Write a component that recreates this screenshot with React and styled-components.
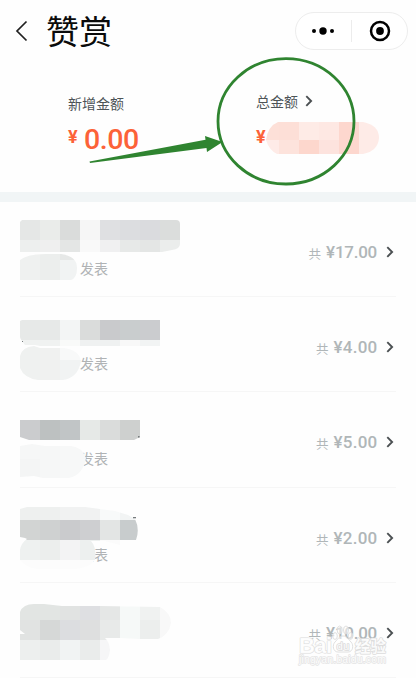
import React from 'react';
import styled, { createGlobalStyle } from 'styled-components';

const Global = createGlobalStyle`
  * { box-sizing: border-box; }
  body { margin: 0; background: #fefefe; font-family: "Noto Sans CJK SC", sans-serif; }
`;
const Screen = styled.main`
  position: relative;
  width: 416px;
  height: 678px;
  overflow: hidden;
  background: #fefefe;
`;
const Header = styled.header`
  display: flex;
  align-items: center;
  height: 61px;
  padding: 0 8px 0 15px;
`;
const BackIcon = styled.svg`
  width: 14px;
  height: 22px;
  margin-right: 17px;
`;
const Title = styled.h1`
  flex: 1;
  margin: 0;
  padding-bottom: 1px;
  font-size: 33px;
  line-height: 58px;
  font-weight: 400;
  color: #0b0b0b;
`;
const Capsule = styled.div`
  display: flex;
  align-items: center;
  width: 113px;
  height: 38px;
  border: 1px solid #ededed;
  border-radius: 19px;
  background: #fff;
`;
const CapsuleButton = styled.div`
  display: flex;
  flex: 1;
  align-items: center;
  justify-content: center;
  height: 22px;
  border-left: ${p => (p.$divided ? '1px solid #ececec' : '0')};
`;
const Summary = styled.section`
  display: grid;
  grid-template-columns: 188px 1fr;
  height: 131px;
  padding: 30px 0 0 68px;
  color: #4d5457;
`;
const Label = styled.div`
  display: flex;
  align-items: center;
  gap: 7px;
  height: 24px;
  margin-top: ${p => p.$lift || 0}px;
  font-size: 14px;
  line-height: 24px;
`;
const Total = styled.div`
  display: flex;
  align-items: flex-start;
  height: 34px;
  margin-top: ${p => p.$gap || 0}px;
  font-family: Roboto, sans-serif;
  font-weight: 500;
  color: #fc6238;
`;
const Currency = styled.span`
  width: ${p => p.$width}px;
  font-size: 18px;
  font-weight: 700;
  line-height: ${p => p.$line}px;
`;
const Figure = styled.span`
  font-size: 28.5px;
  line-height: 39px;
  letter-spacing: -0.4px;
`;
const Band = styled.div`
  height: 10px;
  background: #f1f5f6;
`;
const Row = styled.article`
  position: relative;
  display: flex;
  justify-content: space-between;
  height: ${p => p.$height}px;
  margin: 0 20px;
  border-bottom: 1px solid #f6f6f6;
`;
const Published = styled.span`
  padding: 54px 0 0 60px;
  font-size: 14px;
  line-height: 24px;
  color: #b0b3b5;
`;
const Sum = styled.div`
  display: flex;
  align-items: center;
  height: 24px;
  margin: 38px 2px 0 0;
  color: #b0b6b8;
`;
const Together = styled.span`
  padding-top: 4px;
  margin-right: 5px;
  font-size: 12.5px;
  line-height: 20px;
`;
const Amount = styled.span`
  margin-right: ${p => (p.$tight ? 9 : 8.5)}px;
  letter-spacing: ${p => (p.$tight ? -0.25 : 0.25)}px;
  font-family: Roboto, sans-serif;
  font-size: 17px;
  font-weight: 500;
  line-height: 24px;
`;
const RowMask = styled.svg`
  position: absolute;
  left: -20px;
  top: 0;
  width: 200px;
  height: 95px;
`;
const TotalMask = styled.svg`
  width: 116px;
  height: 34px;
  margin-left: -4px;
`;
const Annotation = styled.svg`
  position: absolute;
  left: 0;
  top: 0;
  width: 416px;
  height: 200px;
`;
const Watermark = styled.svg`
  position: absolute;
  left: 296px;
  top: 620px;
  width: 96px;
  height: 50px;
  fill: rgba(255, 255, 255, 0.9);
  stroke: #dcdcdc;
  stroke-width: 1.2;
  stroke-linejoin: round;
  text { paint-order: stroke fill; }
`;

const Chevron = () => (
  <svg width="8" height="12" viewBox="0 0 8 12">
    <path d="M1.3 1.2 6.1 6l-4.8 4.8" fill="none" stroke="#4b5052" strokeWidth="1.9" />
  </svg>
);

// Each tile is [x, y, width, height, fill]; the outline rounds off the group.
const records = [
  {
    top: 202, height: 95, amount: '17.00', published: true,
    outline: 'M22 220H176Q180 220 180 224V244Q180 249 172 250L162 252H20V222ZM20 260Q27 254 46 254H61Q77 256 77 268Q77 278 71 280H20Z',
    tiles: [
      [20, 220, 20, 20, '#e5e7e6'], [40, 220, 20, 20, '#eaecea'], [60, 220, 20, 20, '#dadcdb'], [80, 220, 20, 20, '#f6f6f6'],
      [100, 220, 20, 20, '#dfe0e2'], [120, 220, 20, 20, '#dcdde0'], [140, 220, 20, 20, '#dadbde'], [160, 220, 20, 20, '#dbdddc'],
      [20, 240, 20, 12, '#edefee'], [40, 240, 20, 12, '#efefef'], [60, 240, 20, 12, '#e4e6e5'], [80, 240, 20, 12, '#f9f9f9'],
      [100, 240, 20, 12, '#f0f0f1'], [120, 240, 20, 12, '#e7e9e8'], [140, 240, 20, 12, '#e4e6e5'], [160, 240, 20, 12, '#ebedec'],
      [20, 252, 20, 28, '#eff1f0'], [40, 252, 20, 28, '#eceeed'], [60, 252, 20, 8, '#e6e8e7'], [60, 260, 20, 20, '#f1f3f3'],
    ],
  },
  {
    top: 297, height: 95, amount: '4.00', published: true,
    outline: 'M20 321L22 320H160V346H40L35 345H25Q20 339 20 337ZM20 356Q22 347 34 346L40 348H64Q79 350 81 361Q78 378 63 380H38Q24 378 20 368Z',
    tiles: [
      [20, 320, 40, 20, '#e7e9e8'], [60, 320, 20, 20, '#f3f5f5'], [80, 320, 20, 20, '#dadcdb'], [100, 320, 20, 20, '#c9cacc'],
      [120, 320, 20, 20, '#c9cdce'], [140, 320, 20, 20, '#cbcccf'], [20, 340, 40, 6, '#f0f2f1'], [60, 340, 20, 6, '#f9faf9'],
      [80, 340, 40, 6, '#eff1f1'], [120, 340, 20, 6, '#f8f8f8'], [140, 340, 20, 6, '#f2f4f4'], [20, 346, 20, 34, '#eff1f0'],
      [40, 346, 20, 34, '#f0f1f0'], [60, 346, 22, 14, '#f8f9f9'], [60, 360, 22, 20, '#f1f3f3'],
    ],
    speck: [22, 341, 1, 1],
  },
  {
    top: 392, height: 96, amount: '5.00', published: true,
    outline: 'M20 420H140V437L134 440H29L20 437ZM20 446L32 444L45 446H71Q82 447 86 458Q83 475 69 478H43L34 476L20 477Z',
    tiles: [
      [20, 420, 20, 20, '#cbccce'], [40, 420, 20, 20, '#bdc1c1'], [60, 420, 20, 20, '#c1c5c6'], [80, 420, 20, 20, '#e6e9e7'],
      [100, 420, 20, 20, '#dadcdb'], [120, 420, 20, 20, '#ced0cf'], [20, 444, 20, 15, '#f6f7f7'], [20, 459, 20, 19, '#f4f5f5'],
      [40, 444, 20, 34, '#f6f7f7'], [60, 444, 27, 34, '#f7f8f8'],
    ],
    speck: [138, 436, 1.6, 1.6],
  },
  {
    top: 488, height: 95, amount: '2.00', published: true,
    outline: 'M20 509L27 507H85L115 511L128 515L135 519Q140 529 136 540H120V545L105 541H91Q97 548 95 560Q89 568 75 569H37Q25 567 20 560V550Q21 543 27 539L25 538L20 537Z',
    tiles: [
      [20, 507, 40, 13, '#eef0ef'], [60, 507, 40, 13, '#f1f2f2'], [100, 507, 20, 13, '#f8fafa'], [120, 507, 20, 13, '#f2f4f4'],
      [20, 520, 20, 20, '#d2d4d3'], [40, 520, 20, 20, '#cfd1d1'], [60, 520, 20, 20, '#cacbcd'], [80, 520, 20, 20, '#cecfd1'],
      [100, 520, 20, 20, '#e3e5e4'], [120, 520, 20, 20, '#c8cccd'], [20, 540, 20, 20, '#eef1f0'], [40, 540, 20, 20, '#eceeed'],
      [60, 540, 20, 20, '#f3f3f4'], [80, 540, 20, 20, '#edf0ef'], [100, 540, 20, 6, '#fbfbfb'], [20, 560, 76, 9, '#fcfcfc'],
    ],
    speck: [133, 517, 3, 1.3],
  },
  {
    top: 583, height: 95, amount: '10.00', published: false,
    outline: 'M20 612Q23 604 34 604H44L62 606H100L160 607Q171 613 171 623Q169 635 158 639H140L120 638L105 638Q109 641 110 650Q109 658 106 660H20V634H25L20 630Z',
    tiles: [
      [20, 603, 40, 17, '#e2e5e3'], [60, 603, 20, 17, '#e1e3e2'], [80, 603, 20, 17, '#dedfe2'], [100, 603, 20, 17, '#e5e7e6'],
      [120, 603, 20, 17, '#f6f9f8'], [140, 603, 20, 17, '#f0f2f1'], [160, 603, 12, 37, '#f8f8f8'], [20, 620, 20, 20, '#e1e3e2'],
      [40, 620, 20, 20, '#d6d8d7'], [60, 620, 20, 20, '#dcdde0'], [80, 620, 20, 20, '#dedfdf'], [100, 620, 20, 20, '#e8eae9'],
      [120, 620, 20, 20, '#f6f9f8'], [140, 620, 20, 20, '#eceeed'], [20, 640, 20, 20, '#edefee'], [40, 640, 20, 20, '#eaeceb'],
      [60, 640, 20, 20, '#f1f3f3'], [80, 640, 20, 20, '#eaeceb'], [100, 640, 11, 20, '#f6f6f7'],
    ],
  },
];

const Tiles = ({ id, outline, tiles }) => (
  <>
    <clipPath id={id}><path d={outline} /></clipPath>
    <g clipPath={`url(#${id})`} shapeRendering="crispEdges">
      {tiles.map(([x, y, w, h, fill]) => <rect key={`${x}-${y}`} x={x} y={y} width={w} height={h} fill={fill} />)}
    </g>
  </>
);

const totalTiles = [
  [0, 0, 15, 18, '#fde0d8'], [15, 0, 20, 18, '#fddfd7'], [35, 0, 20, 18, '#feebe6'], [55, 0, 20, 18, '#fee8e3'],
  [75, 0, 20, 32, '#fdd7ce'], [95, 0, 20, 32, '#feebe7'], [0, 18, 15, 14, '#feebe7'], [15, 18, 20, 14, '#fde3dc'],
  [35, 18, 20, 14, '#fdd7cd'], [55, 18, 20, 14, '#fde3de'],
];

export default function App() {
  return (
    <Screen>
      <Global />
      <Header>
        <BackIcon viewBox="0 0 14 22"><path d="M11.5 1.5 2 11l9.5 9.5" fill="none" stroke="#202020" strokeWidth="1.7" /></BackIcon>
        <Title>赞赏</Title>
        <Capsule>
          <CapsuleButton>
            <svg width="24" height="10" viewBox="0 0 24 10"><circle cx="2" cy="5" r="2" /><circle cx="11" cy="5" r="3.7" /><circle cx="20" cy="5" r="2" /></svg>
          </CapsuleButton>
          <CapsuleButton $divided>
            <svg width="22" height="22" viewBox="0 0 22 22"><circle cx="11" cy="11" r="9" fill="none" stroke="#000" strokeWidth="2.5" /><circle cx="11" cy="11" r="3.9" /></svg>
          </CapsuleButton>
        </Capsule>
      </Header>
      <Summary>
        <div>
          <Label>新增金额</Label>
          <Total $gap={5}><Currency $width={16} $line={34}>¥</Currency><Figure>0.00</Figure></Total>
        </div>
        <div>
          <Label $lift={-2}>总金额 <Chevron /></Label>
          <Total $gap={8}>
            <Currency $width={12} $line={32}>¥</Currency>
            <TotalMask viewBox="0 -1 116 34">
              <Tiles id="total" outline="M14 0H99Q115 3 115 16Q114 29 99 32H13Q5 28 2 18Q4 4 14 0Z" tiles={totalTiles} />
            </TotalMask>
          </Total>
        </div>
      </Summary>
      <Band />
      {records.map(r => (
        <Row key={r.amount} $height={r.height}>
          <Published>{r.published && '发表'}</Published>
          <Sum><Together>共</Together><Amount $tight={r.amount.length > 4}>¥{r.amount}</Amount><Chevron /></Sum>
          <RowMask viewBox={`0 ${r.top} 200 95`}>
            <Tiles id={`row-${r.top}`} outline={r.outline} tiles={r.tiles} />
            {r.speck && <rect x={r.speck[0]} y={r.speck[1]} width={r.speck[2]} height={r.speck[3]} fill="#777c7e" />}
          </RowMask>
        </Row>
      ))}
      <Annotation viewBox="0 0 416 200">
        <ellipse cx="286" cy="121.3" rx="68" ry="62.7" fill="none" stroke="#2f8430" strokeWidth="2.8" />
        <path d="M89.5 161.5 205.5 139.7 205 136 222.5 142 207 152 206.5 148 90 163Z" fill="#2f8430" />
      </Annotation>
      <Watermark viewBox="0 0 96 50">
        <text x="3" y="32.5" fontFamily="Liberation Sans" fontSize="22" fontWeight="700" textLength="33">Bai</text>
        <g fillOpacity=".6" strokeWidth="0.9">
          <ellipse cx="39" cy="16" rx="2.3" ry="3.4" />
          <ellipse cx="43.7" cy="10" rx="2.5" ry="4" />
          <ellipse cx="50" cy="10" rx="2.5" ry="4" />
          <ellipse cx="54.5" cy="16" rx="2.3" ry="3.4" />
          <path d="M47 16C43 16 42 19 39 22C36 25 37 32 42 32H52C57 32 58 25 55 22C52 19 51 16 47 16Z" />
        </g>
        <text x="40.5" y="30" fontFamily="Liberation Sans" fontSize="11.5" fontWeight="400" strokeWidth="1.6">du</text>
        <text x="59" y="32" fontFamily="Noto Sans CJK SC" fontSize="15.5" fontWeight="700" strokeWidth="1.5">经验</text>
        <text x="3" y="43" fontFamily="Liberation Sans" fontSize="10.5" textLength="87" stroke="#e4e4e4" strokeWidth="1.4">jingyan.baidu.com</text>
      </Watermark>
    </Screen>
  );
}
